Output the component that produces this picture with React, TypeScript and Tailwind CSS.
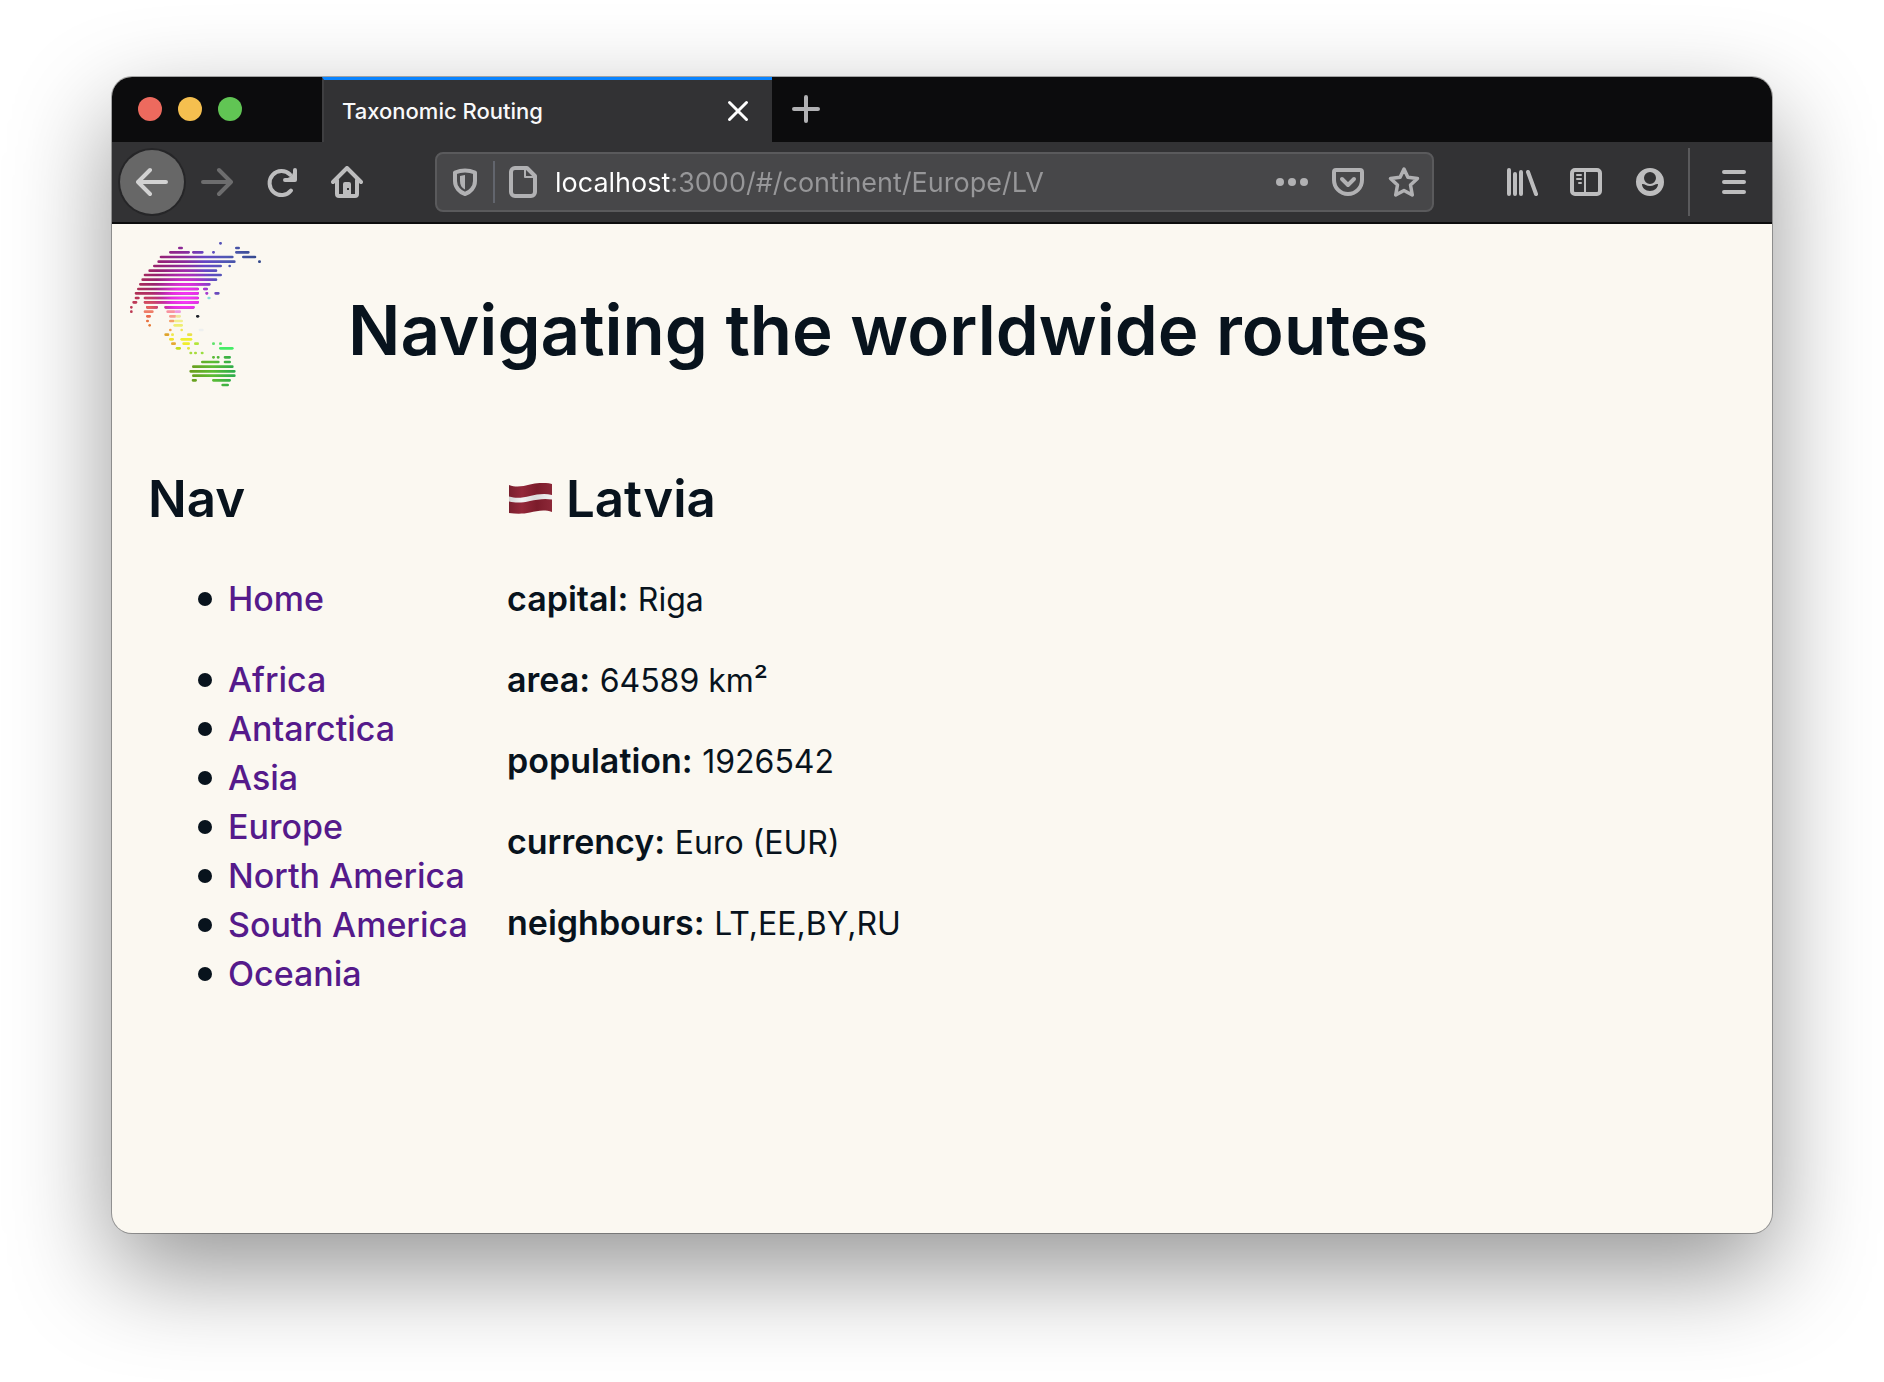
import type { ReactNode } from "react";

const continents = ["Africa", "Antarctica", "Asia", "Europe", "North America", "South America", "Oceania"];

const facts = [
  { label: "capital", value: "Riga" },
  { label: "area", value: "64589 km²" },
  { label: "population", value: "1926542" },
  { label: "currency", value: "Euro (EUR)" },
  { label: "neighbours", value: "LT,EE,BY,RU" },
];

/* Rows of the dotted globe: y, then start/end pairs. */
const northRows: number[][] = [
  [40, 313, 320],
  [54, 190, 203, 361, 374],
  [67, 163, 224, 232, 265, 292, 299, 361, 403],
  [81, 135, 355, 382, 423],
  [95, 128, 361, 430, 437],
  [108, 115, 320, 341, 347],
  [122, 101, 306],
  [135, 87, 320],
  [149, 80, 306],
  [163, 73, 286],
  [177, 67, 251, 265, 278],
  [190, 60, 251, 272, 279, 299, 313],
  [204, 60, 73, 87, 251],
  [217, 53, 66, 87, 251],
  [232, 46, 52, 94, 128, 149, 238],
  [245, 46, 52],
];

const southRows: number[][] = [
  [382, 292, 299, 306, 313, 327, 347],
  [396, 259, 313, 327, 347],
  [410, 232, 355],
  [424, 224, 361],
  [437, 232, 361],
  [451, 231, 245, 292, 347],
  [465, 320, 341],
];

const spots: [number, number, number, string][] = [
  [204, 278, 286, "#86e0dc"],
  [245, 87, 115, "#ee7d68"],
  [245, 155, 180, "#f8929f"],
  [245, 180, 197, "#ee9ae2"],
  [259, 94, 107, "#ea6a4c"],
  [259, 163, 183, "#f89f90"],
  [259, 183, 197, "#efe89a"],
  [259, 244, 252, "#1c2028"],
  [273, 94, 101, "#e8713f"],
  [273, 163, 178, "#f5a068"],
  [273, 178, 203, "#f2ef8e"],
  [286, 101, 107, "#e57a36"],
  [286, 176, 203, "#eeee72"],
  [300, 163, 169, "#f2a04a"],
  [300, 197, 203, "#efe552"],
  [300, 252, 265, "#eef0f0"],
  [314, 149, 162, "#dfa42c"],
  [314, 169, 176, "#efe84c"],
  [314, 217, 231, "#e9e148"],
  [328, 163, 176, "#f0e22e"],
  [328, 197, 231, "#eeee2e"],
  [341, 169, 182, "#e5a832"],
  [341, 203, 224, "#f0ee2c"],
  [341, 238, 251, "#b4e63c"],
  [341, 292, 299, "#5fe26c"],
  [341, 313, 320, "#5fe26c"],
  [355, 183, 197, "#c3dc1e"],
  [355, 217, 224, "#e3e840"],
  [355, 313, 355, "#44ec66"],
  [369, 224, 231, "#a8dc3c"],
  [369, 238, 245, "#a8dc3c"],
  [369, 258, 265, "#9ade40"],
];

function rowsPath(rows: number[][]) {
  return rows
    .map(([y, ...xs]) => {
      let d = "";
      for (let i = 0; i < xs.length; i += 2) d += `M${xs[i] + 3} ${y}H${xs[i + 1] - 3}`;
      return d;
    })
    .join("");
}

function Globe() {
  const north = rowsPath(northRows);
  return (
    <svg className="h-[148px] w-[132px] shrink-0" viewBox="45 30 396 444" fill="none" strokeWidth="8" strokeLinecap="round" role="img" aria-label="Dotted world map">
      <defs>
        <linearGradient id="north" gradientUnits="userSpaceOnUse" x1="50" y1="0" x2="430" y2="0">
          <stop offset="0" stopColor="#b0344e" />
          <stop offset="0.2" stopColor="#972070" />
          <stop offset="0.42" stopColor="#8a2a9c" />
          <stop offset="0.58" stopColor="#6446c4" />
          <stop offset="0.75" stopColor="#5058b4" />
          <stop offset="1" stopColor="#33488c" />
        </linearGradient>
        <radialGradient id="glow" gradientUnits="userSpaceOnUse" cx="212" cy="208" r="105">
          <stop offset="0.1" stopColor="#f836f8" />
          <stop offset="0.4" stopColor="#f22cea" stopOpacity="0.9" />
          <stop offset="1" stopColor="#c828c0" stopOpacity="0" />
        </radialGradient>
        <radialGradient id="warm" gradientUnits="userSpaceOnUse" cx="100" cy="240" r="65">
          <stop offset="0" stopColor="#f27058" />
          <stop offset="1" stopColor="#e8406a" stopOpacity="0" />
        </radialGradient>
        <linearGradient id="south" gradientUnits="userSpaceOnUse" x1="225" y1="0" x2="360" y2="0">
          <stop offset="0" stopColor="#6c9c1c" />
          <stop offset="0.5" stopColor="#5cbc34" />
          <stop offset="1" stopColor="#2cac4c" />
        </linearGradient>
      </defs>
      <path d={north} stroke="url(#north)" />
      <path d={north} stroke="url(#glow)" />
      <path d={north} stroke="url(#warm)" />
      <path d={rowsPath(southRows)} stroke="url(#south)" />
      {spots.map(([y, a, b, color]) => (
        <path key={`${y}-${a}`} d={`M${a + 3} ${y}H${b - 3}`} stroke={color} />
      ))}
    </svg>
  );
}

function Flag() {
  return (
    <svg className="h-8 w-[45px] shrink-0" viewBox="-1 0 45 32" role="img" aria-label="Flag of Latvia">
      <defs>
        <linearGradient id="cloth" x1="0" y1="0" x2="1" y2="0">
          <stop offset="0" stopColor="#7a1f2e" />
          <stop offset="0.3" stopColor="#94283a" />
          <stop offset="0.65" stopColor="#7c1c2b" />
          <stop offset="1" stopColor="#8c2838" />
        </linearGradient>
        <linearGradient id="stripe" x1="0" y1="0" x2="1" y2="0">
          <stop offset="0" stopColor="#d4d4d4" />
          <stop offset="0.3" stopColor="#f4f4f4" />
          <stop offset="0.6" stopColor="#dadada" />
          <stop offset="1" stopColor="#f2f2f2" />
        </linearGradient>
      </defs>
      <path d="M1 2C9 5 15 3 22 1.500S36 -1 44 1V29C36 26 29 28 22 29.500S9 31 1 30Z" fill="url(#cloth)" />
      <path d="M1 13.500C9 16 15 14.500 22 13S36 10 44 12V16.500C36 15 29 16.500 22 18S9 20.500 1 18.500Z" fill="url(#stripe)" />
    </svg>
  );
}

function Icon({ children }: { children: ReactNode }) {
  return (
    <svg className="size-8 shrink-0" viewBox="0 0 32 32" fill="none" stroke="currentColor" strokeWidth="4" strokeLinecap="round" strokeLinejoin="round" aria-hidden="true">
      {children}
    </svg>
  );
}

function ToolButton({ label, children }: { label: string; children: ReactNode }) {
  return (
    <button type="button" aria-label={label} className="flex size-16 shrink-0 items-center justify-center">
      {children}
    </button>
  );
}

function TitleBar() {
  return (
    <div className="flex h-[65px] bg-[#0c0c0d]">
      <div className="flex w-[210px] shrink-0 items-center gap-4 pb-0.5 pl-[26px]">
        <button type="button" aria-label="Close window" className="size-6 rounded-full bg-[#ed6a5e]" />
        <button type="button" aria-label="Minimise window" className="size-6 rounded-full bg-[#f5bf4f]" />
        <button type="button" aria-label="Zoom window" className="size-6 rounded-full bg-[#61c554]" />
      </div>
      <div className="flex w-[450px] items-center justify-between border-t-3 border-l-2 border-t-[#0a84ff] border-l-[#3f3f41] bg-[#323234] pr-[18px] pl-[18px]">
        <span className="text-[22px] font-medium text-[#f9f9fa]">Taxonomic Routing</span>
        <button type="button" aria-label="Close tab" className="text-white">
          <svg className="size-8" viewBox="0 0 32 32" stroke="currentColor" strokeWidth="3" strokeLinecap="round" aria-hidden="true">
            <path d="M7.500 7.500l17 17M24.500 7.500l-17 17" />
          </svg>
        </button>
      </div>
      <button type="button" aria-label="Open a new tab" className="flex w-17 items-center justify-center pb-0.5 text-[#b1b1b3]">
        <Icon>
          <path d="M16 4V28M4 16H28" />
        </Icon>
      </button>
    </div>
  );
}

function AddressBar() {
  return (
    <div className="flex h-[60px] min-w-0 flex-1 items-center rounded-lg border-2 border-[#5a5a5c] bg-[#474749] px-3 text-[#b1b1b3]">
      <button type="button" aria-label="Tracking protection">
        <Icon>
          <path d="M6 6.500Q16 2.500 26 6.500V15C26 21.500 21 26.500 16 28 11 26.500 6 21.500 6 15Z" />
          <path d="M11 10Q13 9.300 16 9V23.500C12.500 22 11 19 11 15Z" fill="currentColor" stroke="none" />
        </Icon>
      </button>
      <div className="mx-3 h-[42px] w-0.5 shrink-0 bg-[#62656d]" />
      <button type="button" aria-label="Site information">
        <Icon>
          <path d="M20 2H8a4 4 0 0 0-4 4V26a4 4 0 0 0 4 4H24a4 4 0 0 0 4-4V10Z" />
          <path d="M18 2V11H28" strokeWidth="2" />
        </Icon>
      </button>
      <input
        type="text"
        aria-label="Address"
        readOnly
        value="localhost:3000/#/continent/Europe/LV"
        className="ml-4 min-w-0 flex-1 bg-[linear-gradient(to_right,#ffffff_116px,#979799_116px)] bg-clip-text pt-0.5 text-[27px] leading-10 text-transparent outline-none"
      />
      <div className="flex items-center gap-6">
        <button type="button" aria-label="Page actions">
          <Icon>
            <g fill="currentColor" stroke="none">
              <circle cx="4" cy="16" r="4" />
              <circle cx="16" cy="16" r="4" />
              <circle cx="28" cy="16" r="4" />
            </g>
          </Icon>
        </button>
        <button type="button" aria-label="Save to Pocket">
          <Icon>
            <path d="M4 4H28a2 2 0 0 1 2 2V14A14 14 0 0 1 2 14V6a2 2 0 0 1 2-2Z" />
            <path d="M10 13l6 6 6-6" />
          </Icon>
        </button>
        <button type="button" aria-label="Bookmark this page">
          <Icon>
            <path d="M16 3L19.900 11.200 29.500 12.400 22.500 19 24.300 29 16 24.500 7.700 29 9.500 19 2.500 12.400 12.100 11.200Z" strokeWidth="3.500" />
          </Icon>
        </button>
      </div>
    </div>
  );
}

function ToolBar() {
  return (
    <div className="flex h-[82px] items-center border-b-2 border-[#0c0c0d] bg-[#323234] pr-1.5 pl-2 text-[#bdbdbe]">
      <div className="flex shrink-0 gap-px">
        <button type="button" aria-label="Back" className="flex size-16 items-center justify-center rounded-full bg-[#676767] text-[#d2d2d2] ring-2 ring-[#262628]">
          <Icon>
            <path d="M30 16H2M14 4L2 16 14 28" />
          </Icon>
        </button>
        <button type="button" aria-label="Forward" disabled className="flex size-16 items-center justify-center text-[#6d6d6e]">
          <Icon>
            <path d="M2 16H30M18 4L30 16 18 28" />
          </Icon>
        </button>
        <ToolButton label="Reload">
          <Icon>
            <path d="M25 24.500A12 12 0 1 1 24 8.500M29 4V14H19" />
            <path d="M29 6V14H21Z" fill="currentColor" strokeWidth="1" />
          </Icon>
        </ToolButton>
        <ToolButton label="Home">
          <Icon>
            <path d="M2 16L16 2 30 16M6 14V28a2 2 0 0 0 2 2H24a2 2 0 0 0 2-2V14" />
            <path d="M12 30V18a2 2 0 0 1 2-2H18a2 2 0 0 1 2 2V30ZM16 22V24H18V22Z" fill="currentColor" fillRule="evenodd" stroke="none" />
          </Icon>
        </ToolButton>
      </div>
      <div className="mx-14 flex min-w-0 flex-1">
        <AddressBar />
      </div>
      <ToolButton label="Library">
        <Icon>
          <path d="M3 4V28M9 8V28M15 6V28M22 6L30 28" />
        </Icon>
      </ToolButton>
      <ToolButton label="Sidebars">
        <Icon>
          <rect x="2" y="4" width="28" height="24" rx="3" />
          <path d="M15 4V28M7 9H11M7 13H11M9 17H11" strokeWidth="2" />
        </Icon>
      </ToolButton>
      <ToolButton label="Account">
        <Icon>
          <path
            d="M16 2A14 14 0 0 1 16 30A14 14 0 0 1 16 2ZM16 6A6 6 0 0 0 16 18A6 6 0 0 0 16 6ZM8 18C10.500 17.500 12 20 16 20S21.500 17.500 24 18C24 22 20.500 25 16 25S8 22 8 18Z"
            fill="currentColor"
            fillRule="evenodd"
            stroke="none"
          />
        </Icon>
      </ToolButton>
      <div className="mr-3 ml-1.5 h-[68px] w-0.5 shrink-0 bg-[#5a5a5c]" />
      <ToolButton label="Open menu">
        <Icon>
          <path d="M6 6H26M6 16H26M6 26H26" />
        </Icon>
      </ToolButton>
    </div>
  );
}

function NavItem({ children }: { children: ReactNode }) {
  return (
    <li className="flex items-center gap-4 before:size-3.5 before:rounded-full before:bg-[#08131d]">
      <a href="#" className="font-medium text-[#551a8b]">
        {children}
      </a>
    </li>
  );
}

export default function App() {
  return (
    <div className="flex min-h-screen flex-col bg-white px-28 pt-[77px] pb-[149px] font-['Inter',sans-serif]">
      <div className="flex flex-1 flex-col overflow-hidden rounded-[20px] bg-[#fbf8f1] shadow-[0_0_0_1px_rgba(0,0,0,0.3),0_38px_100px_rgba(0,0,0,0.42)]">
        <TitleBar />
        <ToolBar />
        <div className="flex-1 text-[#08131d]">
          <header className="flex items-start gap-[86px] pt-4 pl-[18px]">
            <Globe />
            <h1 className="mt-[50px] text-[69px] leading-[80px] font-semibold">Navigating the worldwide routes</h1>
          </header>
          <div className="flex pt-18 pl-9 text-[34px] leading-[49px]">
            <nav className="w-[359px] shrink-0">
              <h2 className="text-[51px] leading-[78px] font-semibold">Nav</h2>
              <ul className="mt-9 pl-[50px]">
                <NavItem>Home</NavItem>
              </ul>
              <ul className="mt-8 pl-[50px]">
                {continents.map((name) => (
                  <NavItem key={name}>{name}</NavItem>
                ))}
              </ul>
            </nav>
            <main>
              <h2 className="flex items-center gap-[14px] text-[51px] leading-[78px] font-semibold">
                <Flag />
                Latvia
              </h2>
              <div className="mt-9 flex flex-col gap-8">
                {facts.map(({ label, value }) => (
                  <p key={label}>
                    <strong className="font-semibold">{label}:</strong> <span className="text-[32px] leading-none">{value}</span>
                  </p>
                ))}
              </div>
            </main>
          </div>
        </div>
      </div>
    </div>
  );
}
